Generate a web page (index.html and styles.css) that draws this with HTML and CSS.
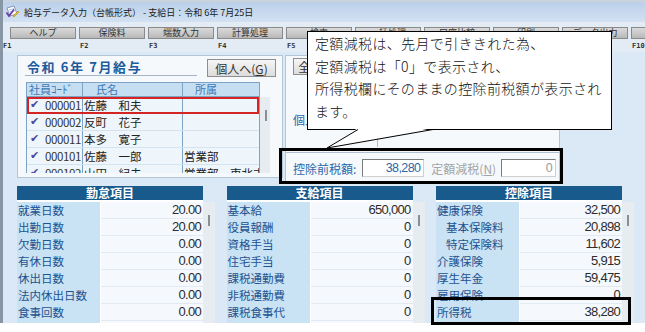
FILE: index.html
```html
<!DOCTYPE html>
<html lang="ja">
<head>
  <meta charset="UTF-8" />
  <title>給与データ入力（台帳形式）</title>
  <link rel="stylesheet" href="styles.css">
</head>
<body>
  <div class="screen">
    <div class="window">
      <div class="titlebar">
        <svg class="app-icon" width="15" height="14" viewBox="0 0 15 14">
          <path d="M2 3 L9 1 L12 9 L5 11 Z" fill="#fff" stroke="#6d7fa8" stroke-width="0.8"/>
          <path d="M4 5 L9 3.6 M4.6 7 L9.6 5.6" stroke="#9fb2d6" stroke-width="0.8"/>
          <path d="M1.5 7.5 L4 11 L9 4.5" fill="none" stroke="#6a3ea8" stroke-width="1.8"/>
          <path d="M9 12 L14 7 L13 6 L8 11 Z" fill="#f2c230" stroke="#9a7a10" stroke-width="0.5"/>
        </svg>
        <span>給与データ入力（台帳形式） - 支給日：令和 6年 7月25日</span>
      </div>

      <div class="toolbar">
        <button>ヘルプ</button>
        <button>保険料</button>
        <button>端数入力</button>
        <button>計算処理</button>
        <button>検索</button>
        <button>一括処理</button>
        <button>口座比較</button>
        <button>印刷</button>
        <button>データ出力</button>
        <button>閉じる</button>
      </div>
      <div class="fkeys">
        <span>F1</span><span>F2</span><span>F3</span><span>F4</span><span>F5</span>
        <span>F6</span><span>F7</span><span>F8</span><span>F9</span><span>F10</span>
      </div>

      <div class="main">
        <div class="top">
          <section class="panel staff">
            <div class="staff-head">
              <div class="period">令和 6年 7月給与</div>
              <button class="btn to-person">個人へ(<u>G</u>)</button>
            </div>
            <div class="staff-body">
              <div class="staff-table">
                <div class="srow shead">
                  <div class="c1">社員ｺｰﾄﾞ</div><div class="c2">氏名</div><div class="c3">所属</div>
                </div>
                <div class="srow selected">
                  <div class="c1"><span class="chk">✔</span><span class="code">000001</span></div><div class="c2">佐藤　和夫</div><div class="c3"></div>
                </div>
                <div class="srow">
                  <div class="c1"><span class="chk">✔</span><span class="code">000002</span></div><div class="c2">反町　花子</div><div class="c3"></div>
                </div>
                <div class="srow">
                  <div class="c1"><span class="chk">✔</span><span class="code">000011</span></div><div class="c2">本多　寛子</div><div class="c3"></div>
                </div>
                <div class="srow">
                  <div class="c1"><span class="chk">✔</span><span class="code">000101</span></div><div class="c2">佐藤　一郎</div><div class="c3">営業部</div>
                </div>
                <div class="srow">
                  <div class="c1"><span class="chk">✔</span><span class="code">000102</span></div><div class="c2">山田　紀夫</div><div class="c3">営業部　東北支店</div>
                </div>
              </div>
              <div class="track staff-track"><div class="thumb"></div></div>
            </div>
          </section>

          <section class="panel detail">
            <button class="btn all">全体へ(<u>Z</u>)</button>
            <div class="detail-label">個人別明細</div>
            <div class="detail-split"></div>
            <div class="tax-box">
              <span class="tax-label">控除前税額:</span>
              <span class="field">38,280</span>
              <span class="tax-label off">定額減税(<u>N</u>)</span>
              <span class="field off">0</span>
            </div>
          </section>
        </div>

        <div class="sheets">
          <div class="sheet-group">
            <div class="sheet">
              <div class="sheet-title">勤怠項目</div>
              <div class="sheet-rows">
                <div class="row"><div class="lbl">就業日数</div><div class="val">20.00</div></div>
                <div class="row"><div class="lbl">出勤日数</div><div class="val">20.00</div></div>
                <div class="row"><div class="lbl">欠勤日数</div><div class="val">0.00</div></div>
                <div class="row"><div class="lbl">有休日数</div><div class="val">0.00</div></div>
                <div class="row"><div class="lbl">休出日数</div><div class="val">0.00</div></div>
                <div class="row"><div class="lbl">法内休出日数</div><div class="val">0.00</div></div>
                <div class="row"><div class="lbl">食事回数</div><div class="val">0.00</div></div>
                <div class="row"><div class="lbl">遅早時間</div><div class="val">0:00</div></div>
              </div>
            </div>
            <div class="track"><div class="thumb"></div></div>
          </div>

          <div class="sheet-group">
            <div class="sheet">
              <div class="sheet-title">支給項目</div>
              <div class="sheet-rows">
                <div class="row"><div class="lbl">基本給</div><div class="val">650,000</div></div>
                <div class="row"><div class="lbl">役員報酬</div><div class="val">0</div></div>
                <div class="row"><div class="lbl">資格手当</div><div class="val">0</div></div>
                <div class="row"><div class="lbl">住宅手当</div><div class="val">0</div></div>
                <div class="row"><div class="lbl">課税通勤費</div><div class="val">0</div></div>
                <div class="row"><div class="lbl">非税通勤費</div><div class="val">0</div></div>
                <div class="row"><div class="lbl">課税食事代</div><div class="val">0</div></div>
                <div class="row"><div class="lbl">その他手当</div><div class="val">0</div></div>
              </div>
            </div>
            <div class="track"><div class="thumb"></div></div>
          </div>

          <div class="sheet-group">
            <div class="sheet">
              <div class="sheet-title">控除項目</div>
              <div class="sheet-rows">
                <div class="row"><div class="lbl">健康保険</div><div class="val">32,500</div></div>
                <div class="row"><div class="lbl sub">基本保険料</div><div class="val">20,898</div></div>
                <div class="row"><div class="lbl sub">特定保険料</div><div class="val">11,602</div></div>
                <div class="row"><div class="lbl">介護保険</div><div class="val">5,915</div></div>
                <div class="row"><div class="lbl">厚生年金</div><div class="val">59,475</div></div>
                <div class="row"><div class="lbl">雇用保険</div><div class="val">0</div></div>
                <div class="row"><div class="lbl">所得税</div><div class="val">38,280</div></div>
                <div class="row"><div class="lbl">住民税</div><div class="val">0</div></div>
              </div>
            </div>
            <div class="track"><div class="thumb"></div></div>
          </div>
        </div>
      </div>
    </div>

    <!-- annotations laid over the screen -->
    <div class="callout">
      定額減税は、先月で引ききれた為、<br>
      定額減税は「0」で表示され、<br>
      所得税欄にそのままの控除前税額が表示され<br>
      ます。
    </div>
    <svg class="callout-tail" width="120" height="22" viewBox="0 0 120 22">
      <polygon points="38,0 113,0 7,20" fill="#fff"/>
      <path d="M38 1.5 L7 20 L113 1.5" fill="none" stroke="#000" stroke-width="1"/>
    </svg>
    <div class="mark mark-tax"></div>
    <div class="mark mark-income"></div>
  </div>
</body>
</html>
```

FILE: styles.css
```css
:root {
  --bg-main: #dbe8f5;
  --panel: #f5f9fc;
  --panel-line: #b4c5d6;
  --head-dark: #185a8c;
  --cell-label: #c9e2f4;
  --cell-value: #f5f9fd;
  --text-blue: #1d5390;
  --grid-line: #7fa3c4;
  --num-font: "Liberation Sans", "Noto Sans CJK JP", sans-serif;
}
body {
  margin: 0;
  background: #fff;
  font-family: "Noto Sans CJK JP", "Noto Sans", sans-serif;
  color: #222;
}
.screen {
  position: relative;
  width: 645px;
  height: 332px;
  overflow: hidden;
}
.window {
  height: 323px;
  overflow: hidden;
  border-left: 3px solid #8795a4;
  background: var(--bg-main);
  display: flex;
  flex-direction: column;
}

/* title + toolbar */
.titlebar {
  height: 20px;
  flex: none;
  border-top: 2px solid #c9d3de;
  background: linear-gradient(#bcd0ea, #d2e1f2);
  display: flex;
  align-items: center;
  gap: 4px;
  padding-left: 2px;
  font-size: 9px;
  color: #1a1a1a;
}
.app-icon { flex: none; }
.toolbar {
  height: 18px;
  flex: none;
  box-sizing: border-box;
  padding: 5px 0 0 7px;
  display: flex;
  gap: 3px;
  background: #e3ecf5;
}
.toolbar button {
  flex: none;
  width: 66px;
  height: 12px;
  padding: 0;
  border: 1px solid #8a8a8a;
  background: linear-gradient(#dadada, #b9b9b9);
  font: 9px/10px "Noto Sans CJK JP", sans-serif;
  color: #333;
}
.fkeys {
  height: 12px;
  flex: none;
  display: flex;
  background: #e3ecf5;
  font: bold 7px/12px "DejaVu Sans Mono", monospace;
  color: #333;
}
.fkeys span { flex: none; width: 69px; }
.fkeys span:first-child { width: 77px; }

/* main area */
.main {
  flex: 1;
  padding: 3px 0 0 14px;
}
.top {
  display: flex;
  gap: 2px;
  height: 127px;
}
.panel {
  box-sizing: border-box;
  border: 1px solid var(--panel-line);
  background: var(--panel);
}
.btn {
  border: 1px solid #8e8e8e;
  background: linear-gradient(#f6f6f6, #dcdcdc);
  font: 12px/15px "Noto Sans CJK JP", sans-serif;
  color: #333;
  padding: 0;
}

/* staff list */
.staff {
  width: 266px;
  height: 123px;
  padding: 3px 6px 0 7px;
  overflow: hidden;
}
.staff-head {
  display: flex;
  justify-content: space-between;
  height: 18px;
}
.period {
  width: 170px;
  height: 16px;
  padding-left: 2px;
  border-bottom: 1px solid #a3b5c7;
  color: #1e5b9c;
  font-weight: bold;
  font-size: 13px;
  line-height: 16px;
  letter-spacing: 1.6px;
  white-space: nowrap;
}
.to-person {
  width: 69px;
  height: 18px;
}
.staff-body {
  display: flex;
  margin: 5px 0 0 1px;
  height: 91px;
  overflow: hidden;
}
.staff-table {
  width: 234px;
  flex: none;
  border-left: 1px solid var(--grid-line);
  border-right: 1px solid var(--grid-line);
  box-sizing: border-box;
  font-size: 11.5px;
}
.srow {
  display: grid;
  grid-template-columns: 56px 100px 1fr;
  height: 17px;
  box-sizing: border-box;
  border-bottom: 1px solid #d3e3f0;
  background: #eef6fc;
  line-height: 16px;
  white-space: nowrap;
}
.srow > div {
  border-right: 1px solid var(--grid-line);
  overflow: hidden;
}
.srow > .c3 { border-right: none; padding-left: 1px; }
.srow .c2 { padding-left: 1px; }
.shead {
  height: 15px;
  background: #c6def2;
  color: #3c78b6;
  font-size: 11px;
  line-height: 13px;
  border-top: 1px solid var(--grid-line);
  border-bottom: 1px solid var(--grid-line);
}
.shead > div { overflow: visible; }
.shead .c1 { padding-left: 2px; }
.shead .c2 { padding-left: 13px; }
.shead .c3 { padding-left: 12px; }
.srow .c1 {
  display: flex;
  justify-content: space-between;
}
.chk {
  color: #4a4a9c;
  font-family: "DejaVu Sans", sans-serif;
  font-size: 11px;
  padding-left: 3px;
}
.code {
  padding-right: 1px;
  letter-spacing: -0.4px;
  color: #333;
}
.selected {
  outline: 2px solid #d42424;
  outline-offset: -2px;
}
.track {
  width: 12px;
  flex: none;
  margin-top: 16px;
  padding-top: 13px;
  box-sizing: border-box;
  background: #e7ecf1;
}
.thumb {
  width: 2px;
  height: 11px;
  margin-left: 5px;
  background: #8a8f96;
}
.staff-track {
  width: 10px;
  margin-top: 15px;
}
.staff-track .thumb { margin-left: 5px; }

/* detail panel */
.detail {
  width: 275px;
  height: 127px;
  padding: 2px 0 0 7px;
}
.all {
  display: block;
  width: 62px;
  height: 17px;
}
.detail-label {
  margin-top: 38px;
  color: #2a65a8;
  font-size: 12px;
  line-height: 13px;
}
.detail-split {
  margin: 11px 0 0 84px;
  height: 10px;
  border-left: 1px solid #a9bccd;
}
.tax-box {
  margin: 5px 0 0 -7px;
  border-top: 1px solid #b0c0d0;
  padding: 6px 0 0 7px;
  display: flex;
  align-items: center;
  font-size: 12px;
}
.tax-label {
  color: #2c67aa;
  margin-right: 6px;
}
.tax-label.off {
  color: #a4a4a4;
  margin-left: 7px;
  margin-right: 5px;
}
.field {
  width: 62px;
  height: 18px;
  box-sizing: border-box;
  border: 1px solid #d0d0d0;
  border-color: #7a7a7a #d0d0d0 #d0d0d0 #7a7a7a;
  background: #fff;
  text-align: right;
  padding-right: 3px;
  line-height: 16px;
  color: #2c67aa;
  font-family: var(--num-font);
  font-size: 12.5px;
  letter-spacing: -0.6px;
}
.field.off {
  width: 55px;
  color: #999;
}

/* bottom sheets */
.sheets {
  display: grid;
  grid-template-columns: 198px 198px 198px;
  column-gap: 11.5px;
  margin-top: 4px;
}
.sheet-group {
  display: flex;
}
.sheet {
  width: 186px;
  flex: none;
  background: #fff;
}
.sheet-title {
  height: 14px;
  background: var(--head-dark);
  color: #fff;
  font-weight: bold;
  font-size: 12px;
  line-height: 14px;
  text-align: center;
}
.sheet-rows { margin-top: 2px; }
.row {
  display: grid;
  grid-template-columns: 83px 1fr;
  column-gap: 1px;
  height: 17px;
  padding-bottom: 1px;
  box-sizing: border-box;
}
.lbl {
  background: var(--cell-label);
  color: var(--text-blue);
  font-size: 11.5px;
  line-height: 16px;
  padding-left: 1px;
  white-space: nowrap;
}
.lbl.sub { padding-left: 10px; }
.val {
  background: var(--cell-value);
  border-bottom: 1px solid #e2e9f0;
  text-align: right;
  padding-right: 2px;
  font-family: var(--num-font);
  font-size: 13px;
  letter-spacing: -0.7px;
  line-height: 16px;
  color: #2b2b2b;
}

/* annotations */
.callout {
  position: absolute;
  left: 307px;
  top: 31px;
  width: 305px;
  height: 99px;
  box-sizing: border-box;
  border: 1px solid #000;
  background: #fff;
  padding-left: 7px;
  font-size: 14px;
  font-weight: 300;
  line-height: 22.5px;
  letter-spacing: 0.35px;
  color: #111;
  white-space: nowrap;
}
.callout-tail {
  position: absolute;
  left: 320px;
  top: 128px;
}
.mark {
  position: absolute;
  box-sizing: border-box;
  border: 3px solid #000;
}
.mark-tax {
  left: 279px;
  top: 148px;
  width: 284px;
  height: 36px;
}
.mark-income {
  left: 431px;
  top: 297px;
  width: 200px;
  height: 28px;
}
```
